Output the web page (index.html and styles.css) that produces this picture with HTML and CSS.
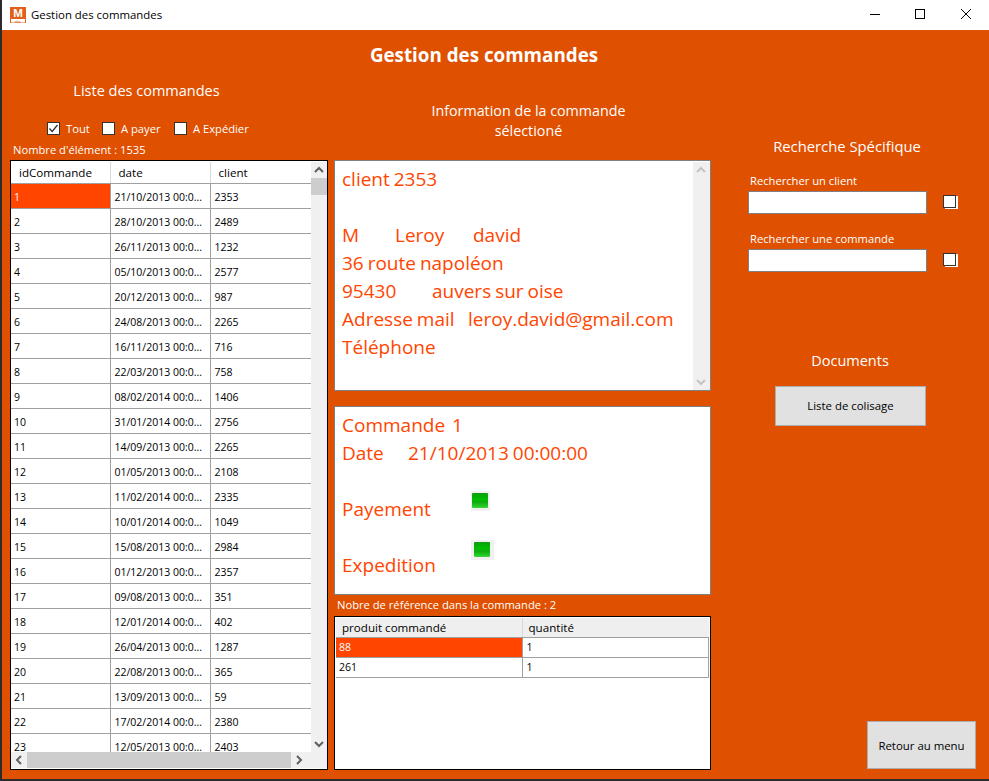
FILE: index.html
```html
<!DOCTYPE html>
<html lang="fr">
<head>
    <meta charset="UTF-8">
    <title>Gestion des commandes</title>
    <link rel="stylesheet" href="styles.css">
</head>
<body>
<div class="window">
    <div class="titlebar">
        <svg class="app-icon" width="16" height="16" viewBox="0 0 16 16">
            <rect width="16" height="16" fill="#e2601c"/>
            <text x="8" y="10.2" text-anchor="middle" font-size="11.5" font-weight="700" font-family="Liberation Sans" fill="#fff">M</text>
            <rect x="1" y="12" width="14" height="3.5" fill="#fff"/>
            <text x="8" y="15.6" text-anchor="middle" font-size="3.2" font-family="Liberation Sans" fill="#d04a00">elec</text>
        </svg>
        <span class="title-text">Gestion des commandes</span>
        <div class="win-controls">
            <svg width="12" height="12" viewBox="0 0 12 12"><path d="M1 6.5H11" stroke="#000" fill="none"/></svg>
            <svg width="12" height="12" viewBox="0 0 12 12"><rect x="1.5" y="1.5" width="9" height="9" stroke="#000" fill="none"/></svg>
            <svg width="12" height="12" viewBox="0 0 12 12"><path d="M1 1L11 11M11 1L1 11" stroke="#000" fill="none"/></svg>
        </div>
    </div>
    <div class="content">
        <h1 class="main-title">Gestion des commandes</h1>
        <div class="columns">
            <section class="col-left">
                <h2 class="heading heading-list">Liste des commandes</h2>
                <div class="filters">
                    <label class="filter filter-all"><span class="check"><svg width="11" height="11" viewBox="0 0 11 11"><path d="M1.5 5.5L4.2 8.5L9.5 2" stroke="#333" stroke-width="1.3" fill="none"/></svg></span>Tout</label>
                    <label class="filter filter-pay"><span class="check"></span>A payer</label>
                    <label class="filter"><span class="check"></span>A Expédier</label>
                </div>
                <div class="small-label count-label">Nombre d'élément : 1535</div>
                <div class="grid-box orders">
                    <div class="orders-body">
                        <div class="orders-view">
                            <table class="grid">
                                <thead>
                                    <tr><th class="c-id">idCommande</th><th class="c-date">date</th><th class="c-client">client</th></tr>
                                </thead>
                                <tbody>
                                    <tr class="selected"><td>1</td><td>21/10/2013 00:0...</td><td>2353</td></tr>
                                    <tr><td>2</td><td>28/10/2013 00:0...</td><td>2489</td></tr>
                                    <tr><td>3</td><td>26/11/2013 00:0...</td><td>1232</td></tr>
                                    <tr><td>4</td><td>05/10/2013 00:0...</td><td>2577</td></tr>
                                    <tr><td>5</td><td>20/12/2013 00:0...</td><td>987</td></tr>
                                    <tr><td>6</td><td>24/08/2013 00:0...</td><td>2265</td></tr>
                                    <tr><td>7</td><td>16/11/2013 00:0...</td><td>716</td></tr>
                                    <tr><td>8</td><td>22/03/2013 00:0...</td><td>758</td></tr>
                                    <tr><td>9</td><td>08/02/2014 00:0...</td><td>1406</td></tr>
                                    <tr><td>10</td><td>31/01/2014 00:0...</td><td>2756</td></tr>
                                    <tr><td>11</td><td>14/09/2013 00:0...</td><td>2265</td></tr>
                                    <tr><td>12</td><td>01/05/2013 00:0...</td><td>2108</td></tr>
                                    <tr><td>13</td><td>11/02/2014 00:0...</td><td>2335</td></tr>
                                    <tr><td>14</td><td>10/01/2014 00:0...</td><td>1049</td></tr>
                                    <tr><td>15</td><td>15/08/2013 00:0...</td><td>2984</td></tr>
                                    <tr><td>16</td><td>01/12/2013 00:0...</td><td>2357</td></tr>
                                    <tr><td>17</td><td>09/08/2013 00:0...</td><td>351</td></tr>
                                    <tr><td>18</td><td>12/01/2014 00:0...</td><td>402</td></tr>
                                    <tr><td>19</td><td>26/04/2013 00:0...</td><td>1287</td></tr>
                                    <tr><td>20</td><td>22/08/2013 00:0...</td><td>365</td></tr>
                                    <tr><td>21</td><td>13/09/2013 00:0...</td><td>59</td></tr>
                                    <tr><td>22</td><td>17/02/2014 00:0...</td><td>2380</td></tr>
                                    <tr><td>23</td><td>12/05/2013 00:0...</td><td>2403</td></tr>
                                </tbody>
                            </table>
                        </div>
                        <div class="vscroll">
                            <svg width="16" height="16" viewBox="0 0 16 16"><path d="M4 10L8 6L12 10" stroke="#606060" stroke-width="2" fill="none"/></svg>
                            <div class="vthumb"></div>
                            <svg width="16" height="16" viewBox="0 0 16 16"><path d="M4 6L8 10L12 6" stroke="#606060" stroke-width="2" fill="none"/></svg>
                        </div>
                    </div>
                    <div class="hscroll">
                        <svg width="16" height="16" viewBox="0 0 16 16"><path d="M10 4L6 8L10 12" stroke="#606060" stroke-width="2" fill="none"/></svg>
                        <div class="hthumb"></div>
                        <svg width="16" height="16" viewBox="0 0 16 16"><path d="M6 4L10 8L6 12" stroke="#606060" stroke-width="2" fill="none"/></svg>
                        <div class="scroll-corner"></div>
                    </div>
                </div>
            </section>

            <section class="col-mid">
                <h2 class="heading heading-info">Information de la commande<br>sélectioné</h2>
                <div class="info-box client-box">
                    <div class="info-text">
                        <div>client 2353</div>
                        <div class="blank"></div>
                        <div class="line"><span class="w-civ">M</span><span class="w-name">Leroy</span><span>david</span></div>
                        <div>36 route napoléon</div>
                        <div class="line"><span class="w-zip">95430</span><span>auvers sur oise</span></div>
                        <div class="line"><span class="w-mail">Adresse mail</span><span>leroy.david@gmail.com</span></div>
                        <div>Téléphone</div>
                    </div>
                    <div class="vscroll light">
                        <svg width="16" height="16" viewBox="0 0 16 16"><path d="M4 10L8 6L12 10" stroke="#c4c4c4" stroke-width="2" fill="none"/></svg>
                        <svg width="16" height="16" viewBox="0 0 16 16"><path d="M4 6L8 10L12 6" stroke="#c4c4c4" stroke-width="2" fill="none"/></svg>
                    </div>
                </div>
                <div class="info-box order-box">
                    <div class="info-text">
                        <div class="line"><span class="w-order">Commande</span><span>1</span></div>
                        <div class="line"><span class="w-date">Date</span><span>21/10/2013 00:00:00</span></div>
                        <div class="blank"></div>
                        <div class="line status"><span class="w-status">Payement</span><span class="led"><span class="led-inner"></span></span></div>
                        <div class="blank"></div>
                        <div class="line status"><span class="w-status">Expedition</span><span class="led led-wide"><span class="led-inner"></span></span></div>
                    </div>
                </div>
                <div class="small-label refs-label">Nobre de référence dans la commande : 2</div>
                <div class="grid-box refs">
                    <table class="grid">
                        <thead>
                            <tr><th class="c-prod">produit commandé</th><th class="c-qty">quantité</th></tr>
                        </thead>
                        <tbody>
                            <tr class="selected"><td>88</td><td>1</td></tr>
                            <tr><td>261</td><td>1</td></tr>
                        </tbody>
                    </table>
                </div>
            </section>

            <section class="col-right">
                <h2 class="heading heading-search">Recherche Spécifique</h2>
                <div class="small-label search-label">Rechercher un client</div>
                <div class="search-row"><div class="search-input"></div><span class="mini-check"></span></div>
                <div class="small-label search-label second">Rechercher une commande</div>
                <div class="search-row"><div class="search-input"></div><span class="mini-check"></span></div>
                <h2 class="heading heading-docs">Documents</h2>
                <button class="btn btn-docs">Liste de colisage</button>
                <button class="btn btn-back">Retour au menu</button>
            </section>
        </div>
    </div>
</div>
</body>
</html>
```

FILE: styles.css
```css
* {
    box-sizing: border-box;
}
html, body {
    margin: 0;
    height: 100%;
}
body {
    font-family: "Open Sans", "Noto Sans", sans-serif;
    font-size: 11px;
    background-color: #2b2b2b;
    overflow: hidden;
}
.window {
    height: 779px;
    margin-left: 2px;
    display: flex;
    flex-direction: column;
}

/* title bar */
.titlebar {
    height: 30px;
    flex: none;
    background-color: #fff;
    display: flex;
    align-items: center;
    padding-left: 8px;
}
.app-icon {
    margin-right: 5px;
    margin-top: -1px;
}
.title-text {
    font-size: 11.4px;
    color: #000;
    margin-top: -1px;
}
.win-controls {
    margin-left: auto;
    margin-top: -2px;
    padding-right: 17px;
    display: flex;
    gap: 33px;
}
.win-controls svg {
    display: block;
}
.win-controls svg:last-child {
    margin-left: 1px;
}

/* main area */
.content {
    flex: 1;
    min-height: 0;
    background-color: #df5000;
    color: #fff;
    display: flex;
    flex-direction: column;
}
.main-title {
    margin: 0;
    height: 50px;
    flex: none;
    line-height: 50px;
    padding-right: 23px;
    text-align: center;
    font-size: 18.8px;
    font-weight: 700;
}
.columns {
    flex: 1;
    min-height: 0;
    display: flex;
    padding: 0 13px 9px 8px;
}
.heading {
    margin: 0;
    font-size: 14.5px;
    font-weight: 400;
    line-height: 20px;
    text-align: center;
}
.small-label {
    font-size: 11.2px;
    line-height: 14px;
}

/* left column */
.col-left {
    width: 318px;
    display: flex;
    flex-direction: column;
}
.heading-list {
    padding-top: 1px;
    padding-right: 45px;
}
.filters {
    display: flex;
    margin: 20px 0 0 37px;
    height: 14px;
}
.filter {
    display: flex;
    align-items: center;
    font-size: 11.2px;
}
.filter-all {
    width: 55px;
}
.filter-pay {
    width: 72px;
}
.check {
    width: 13px;
    height: 13px;
    margin-right: 6px;
    background-color: #fff;
    border: 1px solid #333;
    display: flex;
    align-items: center;
    justify-content: center;
}
.count-label {
    margin: 8px 0 3px 3px;
}
.grid-box {
    background-color: #fff;
    border: 1px solid #000;
    color: #000;
}
.orders {
    flex: 1;
    min-height: 0;
    padding: 1px 0;
    display: flex;
    flex-direction: column;
}
.orders-body {
    flex: 1;
    min-height: 0;
    display: flex;
}
.orders-view {
    width: 300px;
    overflow: hidden;
}

/* grids */
.grid {
    border-collapse: collapse;
    table-layout: fixed;
    width: 100%;
    font-size: 10.5px;
}
.grid th {
    height: 21px;
    font-size: 11.6px;
    font-weight: 400;
    text-align: left;
    padding: 1px 0 0 8px;
    background-color: #fff;
    border-right: 1px solid #d8d8d8;
    border-bottom: 1px solid #a0a0a0;
}
.grid td {
    height: 25px;
    padding: 2px 0 0 3px;
    white-space: nowrap;
    overflow: hidden;
    border-right: 1px solid #a0a0a0;
    border-bottom: 1px solid #a0a0a0;
}
.grid td + td {
    padding-left: 4px;
}
.grid td:last-child, .grid th:last-child {
    border-right: none;
}
.selected td:first-child {
    background-color: #ff4500;
    color: #fff;
}
.c-id {
    width: 99px;
}
.c-date {
    width: 100px;
}

/* scrollbars */
.vscroll {
    width: 16px;
    flex: none;
    background-color: #f0f0f0;
    display: flex;
    flex-direction: column;
    justify-content: space-between;
}
.vscroll svg, .hscroll svg {
    display: block;
    flex: none;
}
.vthumb {
    height: 17px;
    margin-bottom: auto;
    background-color: #cdcdcd;
}
.hscroll {
    height: 16px;
    flex: none;
    background-color: #f0f0f0;
    display: flex;
}
.hthumb {
    width: 264px;
    background-color: #cdcdcd;
}
.scroll-corner {
    width: 20px;
    background-color: #f0f0f0;
}

/* middle column */
.col-mid {
    width: 377px;
    margin-left: 6px;
    display: flex;
    flex-direction: column;
}
.heading-info {
    margin: 21px 0 19px;
    padding-left: 12px;
    font-size: 14.3px;
}
.info-box {
    background-color: #fff;
    border: 1px solid #808080;
    color: #ff4500;
    display: flex;
}
.client-box {
    height: 231px;
}
.order-box {
    height: 189px;
    margin-top: 15px;
}
.info-text {
    flex: 1;
    padding: 4px 0 0 7px;
    font-size: 19px;
    line-height: 28px;
    word-spacing: -1px;
}
.blank {
    height: 28px;
}
.line {
    display: flex;
}
.light {
    width: 17px;
    margin-top: 1px;
}
.w-civ {
    width: 53px;
}
.w-name {
    width: 78px;
}
.w-zip {
    width: 90px;
}
.w-mail {
    width: 126px;
}
.w-order {
    width: 110px;
}
.w-date {
    width: 66px;
}
.w-status {
    width: 129px;
}
.status {
    align-items: flex-start;
}
.led {
    width: 19px;
    height: 20px;
    margin-top: -4px;
    padding: 2px 0 0 1px;
    background-color: #f0f0f0;
    display: flex;
    align-items: flex-start;
}
.led-wide {
    width: 23px;
    margin-top: -11px;
    padding-left: 3px;
}
.led-inner {
    width: 16px;
    height: 15px;
    border-radius: 1px;
    background: linear-gradient(#0a9d0a, #00c000 45%, #12a812 60%, #20c820 85%, #40d040);
}
.refs-label {
    margin: 3px 0 4px 3px;
}
.refs {
    flex: 1;
    padding: 1px;
}
.refs th {
    height: 19px;
    background-color: #efefef;
    padding: 0 0 0 6px;
}
.refs td {
    height: 20px;
    padding-top: 0;
}
.refs td:last-child {
    border-right: 1px solid #a0a0a0;
}
.c-prod {
    width: 186px;
}

/* right column */
.col-right {
    width: 228px;
    margin-left: 37px;
    display: flex;
    flex-direction: column;
}
.heading-search {
    margin-top: 56px;
    padding-right: 30px;
    font-size: 14.8px;
}
.search-label {
    margin: 18px 0 3px 2px;
}
.search-row {
    display: flex;
    align-items: flex-start;
}
.search-input {
    width: 179px;
    height: 23px;
    background-color: #fff;
    border: 1px solid #808080;
}
.mini-check {
    width: 13px;
    height: 13px;
    margin: 4px 0 0 16px;
    background-color: #fff;
    border: 1px solid #333;
    box-shadow: 2px 1px 0 #fff;
}
.heading-docs {
    margin-top: 79px;
    padding-right: 24px;
}
.btn {
    font-family: inherit;
    font-size: 11.4px;
    color: #000;
    background-color: #e1e1e1;
    border: 1px solid #adadad;
    padding: 0;
}
.btn-docs {
    width: 151px;
    height: 40px;
    margin: 15px 0 0 27px;
    padding-bottom: 2px;
}
.btn-back {
    width: 109px;
    height: 48px;
    margin: auto 0 1px 119px;
}
```
